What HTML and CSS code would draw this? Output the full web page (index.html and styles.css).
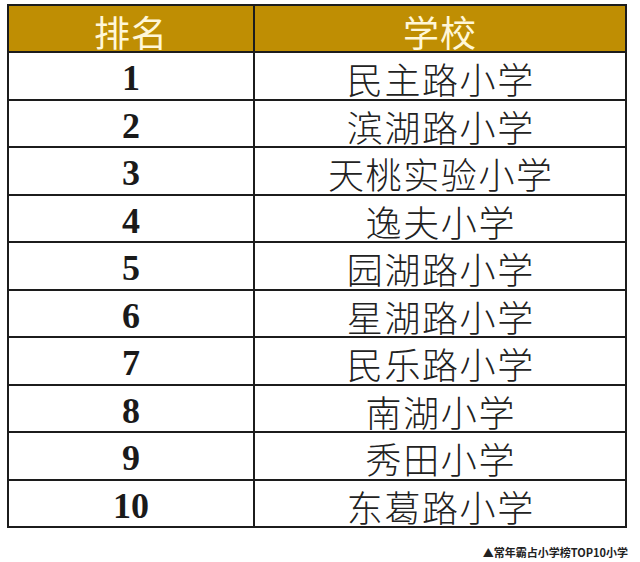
FILE: index.html
```html
<!DOCTYPE html>
<html lang="zh-CN">
<head>
<meta charset="utf-8">
<link rel="stylesheet" href="styles.css">
</head>
<body>
<div class="page">
  <table class="rank">
    <thead>
      <tr><th class="c-rank">排名</th><th class="c-school">学校</th></tr>
    </thead>
    <tbody>
      <tr><td class="num">1</td><td class="name">民主路小学</td></tr>
      <tr><td class="num">2</td><td class="name">滨湖路小学</td></tr>
      <tr><td class="num">3</td><td class="name">天桃实验小学</td></tr>
      <tr><td class="num">4</td><td class="name">逸夫小学</td></tr>
      <tr><td class="num">5</td><td class="name">园湖路小学</td></tr>
      <tr><td class="num">6</td><td class="name">星湖路小学</td></tr>
      <tr><td class="num">7</td><td class="name">民乐路小学</td></tr>
      <tr><td class="num">8</td><td class="name">南湖小学</td></tr>
      <tr><td class="num">9</td><td class="name">秀田小学</td></tr>
      <tr><td class="num">10</td><td class="name">东葛路小学</td></tr>
    </tbody>
  </table>
  <p class="caption">▲常年霸占小学榜TOP10小学</p>
</div>
</body>
</html>
```

FILE: styles.css
```css
html, body {
  margin: 0;
  padding: 0;
  background: #ffffff;
}
.page {
  width: 640px;
  height: 562px;
  padding: 4px 0 0 7px;
  box-sizing: border-box;
}
.rank {
  width: 620px;
  border-collapse: collapse;
  table-layout: fixed;
  border: 2px solid #1c1c1c;
}
.rank th, .rank td {
  border: 2px solid #1c1c1c;
  text-align: center;
  vertical-align: middle;
  padding: 5px 0 0 0;
  box-sizing: border-box;
}
.c-rank { width: 246px; }
.rank th {
  background: #bf8e03;
  color: #fff7d8;
  height: 47px;
  font-family: "Noto Sans CJK SC", sans-serif;
  font-weight: 400;
  font-size: 36px;
  letter-spacing: 1px;
  line-height: 40px;
}
.rank td {
  height: 47.5px;
  line-height: 40px;
}
.num {
  font-family: "Liberation Serif", serif;
  font-weight: 700;
  font-size: 36px;
  color: #1a1a1a;
}
.rank td.name {
  font-family: "Noto Sans CJK SC", sans-serif;
  font-weight: 300;
  font-size: 36px;
  letter-spacing: 1.6px;
  padding-left: 1.6px;
  color: #222222;
}
.caption {
  margin: 17px 0 0 0;
  width: 621px;
  text-align: right;
  font-family: "Noto Sans CJK SC", sans-serif;
  font-weight: 700;
  font-size: 11px;
  line-height: 14px;
  color: #222222;
}
```
